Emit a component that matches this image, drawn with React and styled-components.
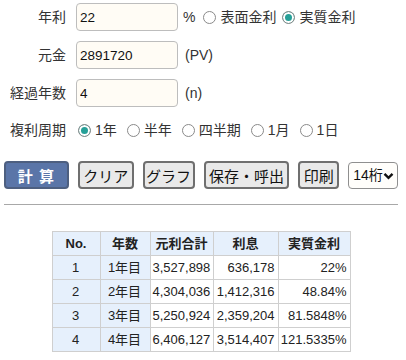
import React, { useState } from "react";
import styled, { createGlobalStyle } from "styled-components";

const rows = [
	{ no: 1, year: "1年目", total: "3,527,898", interest: "636,178", rate: "22%" },
	{ no: 2, year: "2年目", total: "4,304,036", interest: "1,412,316", rate: "48.84%" },
	{ no: 3, year: "3年目", total: "5,250,924", interest: "2,359,204", rate: "81.5848%" },
	{ no: 4, year: "4年目", total: "6,406,127", interest: "3,514,407", rate: "121.5335%" },
];

const periods = ["1年", "半年", "四半期", "1月", "1日"];

const App = () => {
	const [rateType, setRateType] = useState("real");
	const [period, setPeriod] = useState("1年");

	return (
		<Page>
			<GlobalStyle />
			<Form>
				<Row>
					<Label>年利</Label>
					<Input defaultValue="22" />
					<Unit>%</Unit>
					<Choice>
						<Radio
							type="radio"
							name="rateType"
							checked={rateType === "nominal"}
							onChange={_ => setRateType("nominal")}
						/>
						表面金利
					</Choice>
					<Choice>
						<Radio
							type="radio"
							name="rateType"
							checked={rateType === "real"}
							onChange={_ => setRateType("real")}
						/>
						実質金利
					</Choice>
				</Row>

				<Row>
					<Label>元金</Label>
					<Input defaultValue="2891720" />
					<Unit wide>(PV)</Unit>
				</Row>

				<Row>
					<Label>経過年数</Label>
					<Input defaultValue="4" />
					<Unit wide>(n)</Unit>
				</Row>

				<Row short>
					<Label>複利周期</Label>
					<Periods>
						{periods.map(p => (
							<Choice key={p}>
								<Radio
									type="radio"
									name="period"
									checked={period === p}
									onChange={_ => setPeriod(p)}
								/>
								{p}
							</Choice>
						))}
					</Periods>
				</Row>
			</Form>

			<Toolbar>
				<Button primary style={{ width: 65 }}>
					計 算
				</Button>
				<Button style={{ width: 56 }}>クリア</Button>
				<Button style={{ width: 52 }}>グラフ</Button>
				<Button style={{ width: 86 }}>保存・呼出</Button>
				<Button style={{ width: 41 }}>印刷</Button>
				<SelectWrap>
					<Select defaultValue="14">
						<option value="14">14桁</option>
					</Select>
					<Chevron width="11" height="8" viewBox="0 0 11 8">
						<path d="M1.5 1.8 L5.5 5.8 L9.5 1.8" fill="none" stroke="#111" strokeWidth="2.4" />
					</Chevron>
				</SelectWrap>
			</Toolbar>

			<Rule />

			<Table>
				<colgroup>
					<col style={{ width: 48 }} />
					<col style={{ width: 50 }} />
					<col style={{ width: 63 }} />
					<col style={{ width: 65 }} />
					<col style={{ width: 72 }} />
				</colgroup>
				<thead>
					<tr>
						<Th>No.</Th>
						<Th>年数</Th>
						<Th>元利合計</Th>
						<Th>利息</Th>
						<Th>実質金利</Th>
					</tr>
				</thead>
				<tbody>
					{rows.map(r => (
						<tr key={r.no}>
							<Td head>{r.no}</Td>
							<Td head>{r.year}</Td>
							<Td>{r.total}</Td>
							<Td>{r.interest}</Td>
							<Td>{r.rate}</Td>
						</tr>
					))}
				</tbody>
			</Table>
		</Page>
	);
};

// Styled components
const GlobalStyle = createGlobalStyle`
	body {
		margin: 0;
		background: #ffffff;
		font-family: "Liberation Sans", "Noto Sans CJK JP", sans-serif;
		color: #333333;
	}
`;

const Page = styled.div`
	width: 394px;
	padding: 3px 4px 0 4px;
`;

const Form = styled.div`
	display: flex;
	flex-direction: column;
	gap: 10px;
`;

const Row = styled.div`
	display: flex;
	align-items: center;
	height: ${({ short }) => (short ? "22px" : "28px")};
	margin-top: ${({ short }) => (short ? "2px" : "0")};
`;

const Label = styled.div`
	width: 62px;
	margin-right: 10px;
	text-align: right;
	font-size: 14px;
	line-height: 20px;
	color: #333333;
`;

const Input = styled.input`
	box-sizing: border-box;
	width: 102px;
	height: 28px;
	padding: 0 3px;
	border: 1px solid #bdbdbd;
	border-radius: 4px;
	background: #fffcf5;
	font-family: "Liberation Sans", sans-serif;
	font-size: 13.5px;
	color: #111111;
	outline: none;
`;

const Unit = styled.span`
	margin-left: ${({ wide }) => (wide ? "7px" : "5px")};
	margin-right: 8px;
	font-size: 14px;
	color: #333333;
`;

const Periods = styled.div`
	display: flex;
	align-items: center;
	gap: 10px;
	margin-left: 2px;
`;

const Choice = styled.label`
	display: inline-flex;
	align-items: center;
	gap: 4px;
	margin-right: 6px;
	font-size: 14px;
	line-height: 20px;
	color: #333333;
	cursor: pointer;

	${Periods} & {
		margin-right: 0;
	}
`;

const Radio = styled.input`
	appearance: none;
	box-sizing: border-box;
	width: 13px;
	height: 13px;
	margin: 0;
	border: 1px solid #8a8a8a;
	border-radius: 50%;
	background: #ffffff;
	cursor: pointer;

	&:checked {
		background: #26a098;
		box-shadow: inset 0 0 0 2px #ffffff;
	}
`;

const Toolbar = styled.div`
	display: flex;
	align-items: center;
	gap: 9px;
	margin-top: 20px;
`;

const Button = styled.button`
	box-sizing: border-box;
	height: 28px;
	padding: 0;
	border: 2px solid ${({ primary }) => (primary ? "#4d5f80" : "#6f6f6f")};
	border-radius: 4px;
	background: ${({ primary }) => (primary ? "#5a75a8" : "#e9e9e9")};
	color: ${({ primary }) => (primary ? "#ffffff" : "#111111")};
	font-family: "Liberation Sans", "Noto Sans CJK JP", sans-serif;
	font-size: 15px;
	font-weight: ${({ primary }) => (primary ? 700 : 400)};
	letter-spacing: ${({ primary }) => (primary ? "1px" : "0")};
	white-space: nowrap;
	cursor: pointer;
`;

const SelectWrap = styled.div`
	position: relative;
	width: 50px;
	height: 27px;
`;

const Select = styled.select`
	appearance: none;
	box-sizing: border-box;
	width: 100%;
	height: 100%;
	padding: 0 0 0 4px;
	border: 1px solid #8f8f8f;
	border-radius: 4px;
	background: #fffefb;
	font-family: "Liberation Sans", "Noto Sans CJK JP", sans-serif;
	font-size: 14px;
	color: #111111;
	outline: none;
`;

const Chevron = styled.svg`
	position: absolute;
	right: 4px;
	top: 10px;
	pointer-events: none;
`;

const Rule = styled.hr`
	margin: 15px 0 0 0;
	border: none;
	border-top: 1px solid #a8a8a8;
	height: 0;
`;

const Table = styled.table`
	margin: 26px auto 0 auto;
	border-collapse: collapse;
	table-layout: fixed;
	width: 299px;
	font-size: 13px;
	color: #222222;
`;

const Th = styled.th`
	height: 23px;
	padding: 0;
	border: 1px solid #cfcfcf;
	background: #e6f0fc;
	font-weight: 700;
	text-align: center;
	line-height: 18px;
`;

const Td = styled.td`
	height: 23px;
	padding: 0 3px 0 2px;
	border: 1px solid #cfcfcf;
	background: ${({ head }) => (head ? "#e6f0fc" : "#ffffff")};
	text-align: ${({ head }) => (head ? "center" : "right")};
	line-height: 18px;
	white-space: nowrap;
`;

export default App;
